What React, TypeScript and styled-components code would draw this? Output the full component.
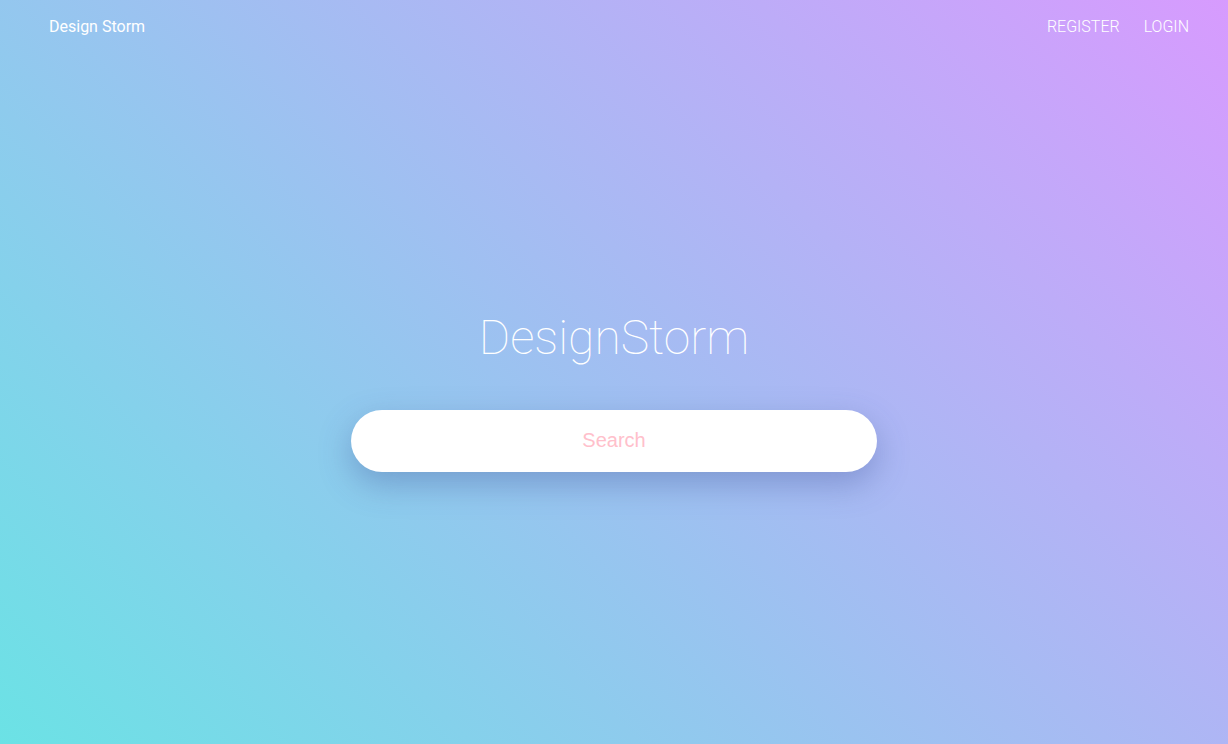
import React from 'react';
import styled, { createGlobalStyle } from 'styled-components';

const GlobalStyle = createGlobalStyle`
  html, body {
    margin: 0;
    padding: 0;
    height: 100%;
  }
  body {
    font-family: Roboto, "Liberation Sans", sans-serif;
    -webkit-font-smoothing: antialiased;
  }
  #root {
    min-height: 100%;
  }
`;

const Page = styled.div`
  display: flex;
  flex-direction: column;
  min-height: 100vh;
  background: linear-gradient(45deg, #6be2e5 0%, #d79bfe 100%);
  color: #fff;
`;

const NavBar = styled.header`
  display: flex;
  align-items: center;
  justify-content: space-between;
  height: 52px;
  padding: 0 39px 0 49px;
`;

const Brand = styled.a`
  font-size: 16px;
  font-weight: 400;
  color: #fff;
  text-decoration: none;
`;

const NavLinks = styled.nav`
  display: flex;
  gap: 24px;
`;

const NavLink = styled.a`
  font-size: 16px;
  font-weight: 300;
  color: #fff;
  text-decoration: none;
  text-transform: uppercase;
`;

const Hero = styled.main`
  flex: 1;
  display: flex;
  flex-direction: column;
  align-items: center;
  padding-top: 257px;
`;

const Title = styled.h1`
  margin: 0;
  font-size: 48px;
  line-height: 1.2;
  font-weight: 100;
`;

const SearchInput = styled.input`
  margin-top: 43px;
  width: 526px;
  height: 62px;
  box-sizing: border-box;
  border: none;
  border-radius: 31px;
  background: #fff;
  box-shadow: 0 12px 32px rgba(60, 80, 150, 0.35);
  font-family: "Liberation Sans", Arial, sans-serif;
  font-size: 20px;
  text-align: center;
  color: #555;
  outline: none;

  &::placeholder {
    color: pink;
  }
`;

export default function App() {
  return (
    <>
      <GlobalStyle />
      <Page>
        <NavBar>
          <Brand href="#">Design Storm</Brand>
          <NavLinks>
            <NavLink href="#">Register</NavLink>
            <NavLink href="#">Login</NavLink>
          </NavLinks>
        </NavBar>
        <Hero>
          <Title>DesignStorm</Title>
          <SearchInput type="text" placeholder="Search" />
        </Hero>
      </Page>
    </>
  );
}
